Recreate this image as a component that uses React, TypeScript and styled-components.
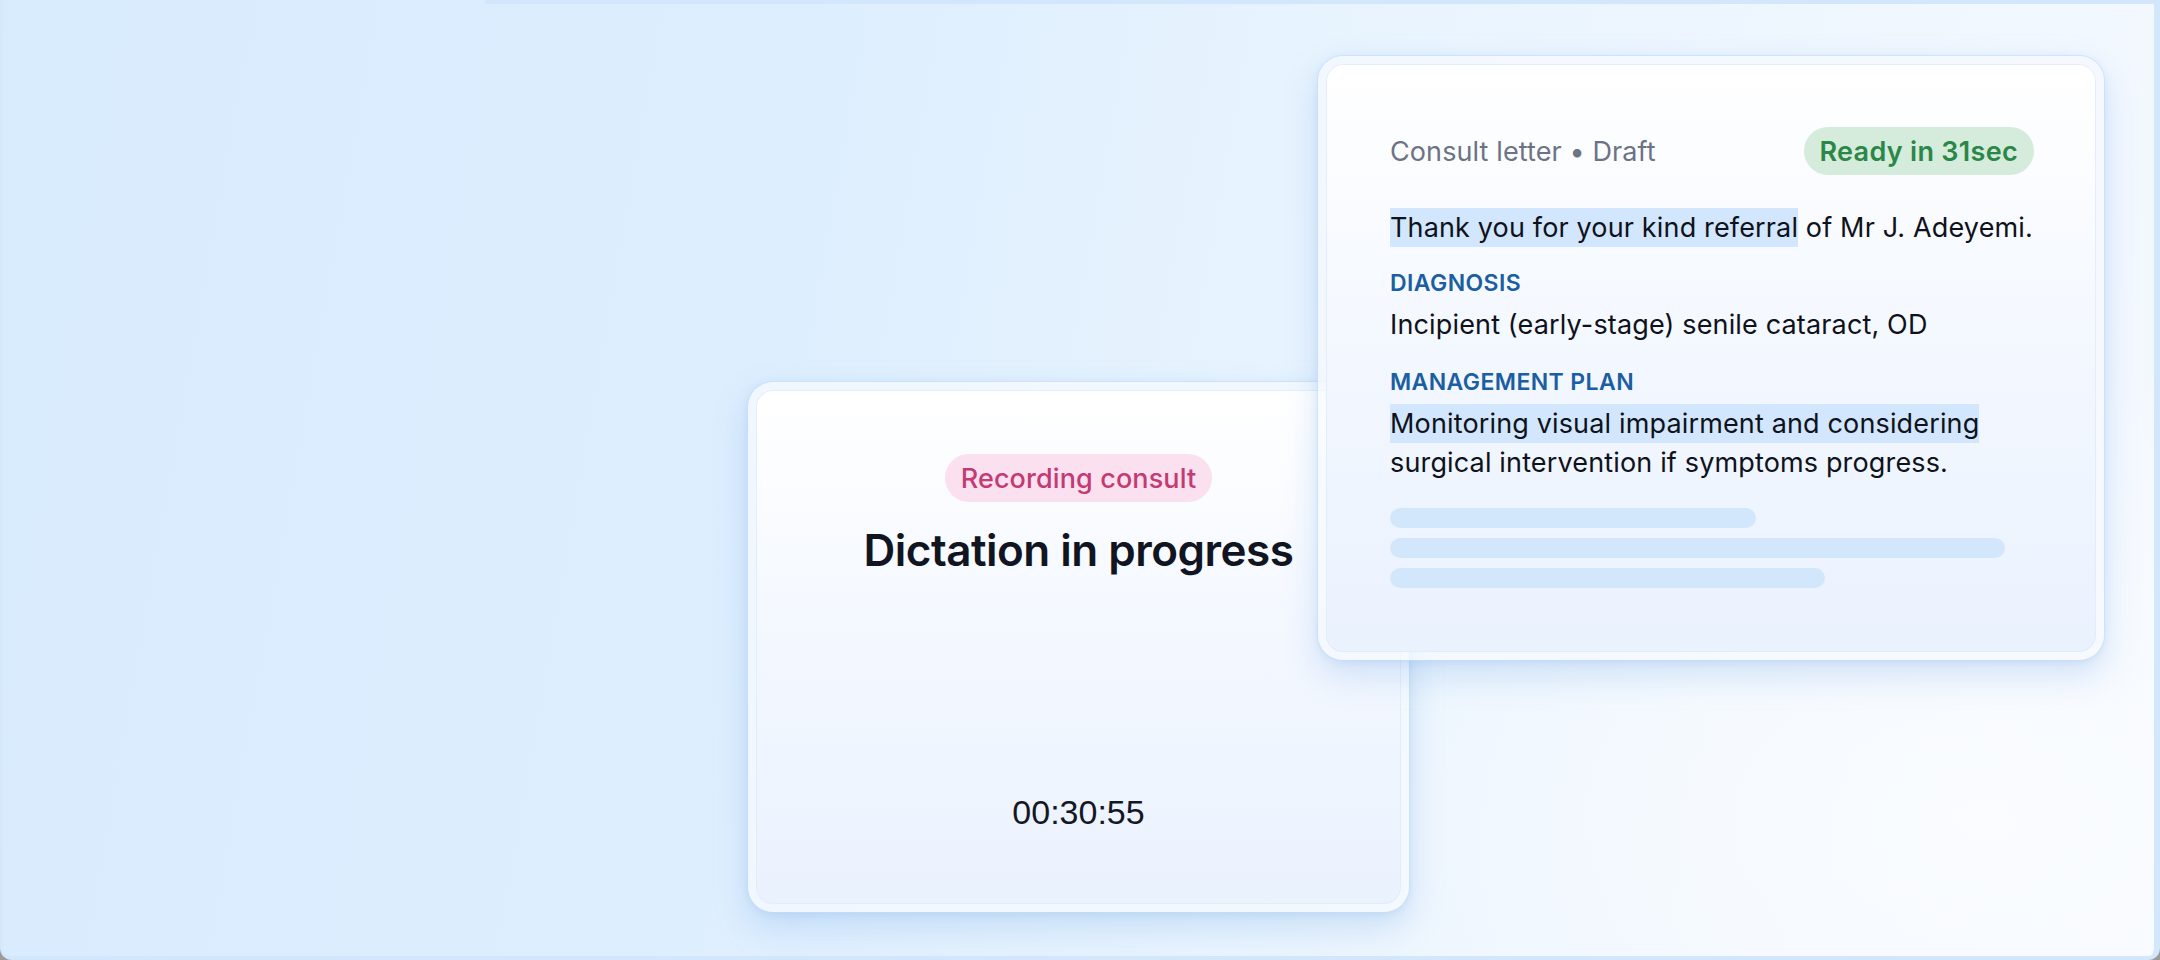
import React from "react"
import styled, { createGlobalStyle } from "styled-components"

const GlobalStyle = createGlobalStyle`
  html, body {
    margin: 0;
    padding: 0;
    background: #9b9b9b;
  }
  body {
    font-family: Inter, Roboto, "Noto Sans", sans-serif;
    -webkit-font-smoothing: antialiased;
  }
`

const Frame = styled.main`
  position: relative;
  width: 2160px;
  height: 960px;
  overflow: hidden;
  border-radius: 0 0 12px 12px;
  background:
    radial-gradient(ellipse 1000px 650px at 1980px 820px, rgba(250, 252, 255, 0.95), rgba(250, 252, 255, 0) 72%),
    linear-gradient(100deg, #d8ebfd 0%, #ddeefe 35%, #e9f4fe 60%, #f5f9ff 100%);
  box-shadow:
    inset -6px 0 0 #d3e7fc,
    inset 0 -4px 0 #d3e7fc,
    inset 3px 0 0 #d6e9fc;
  display: grid;
  grid-template-columns: 748px 570px 91px 695px 1fr;
  grid-template-rows: 56px 326px 278px 252px 1fr;

  &::before {
    content: "";
    position: absolute;
    top: 0;
    left: 485px;
    right: 0;
    height: 4px;
    background: #d3e7fc;
  }
`

const CardShell = styled.section<{ $col: string; $row: string; $z: number }>`
  grid-column: ${(p) => p.$col};
  grid-row: ${(p) => p.$row};
  z-index: ${(p) => p.$z};
  padding: 8px;
  border-radius: 25px;
  background: rgba(246, 250, 255, 0.75);
  box-shadow:
    0 0 0 1px rgba(196, 222, 250, 0.6),
    0 14px 34px rgba(104, 160, 226, 0.28),
    0 2px 8px rgba(120, 170, 230, 0.18);
  display: flex;
`

const CardBody = styled.div<{ $center?: boolean }>`
  flex: 1;
  border-radius: 17px;
  background: linear-gradient(180deg, #ffffff 0%, #f4f8ff 45%, #eaf2fe 100%);
  box-shadow: inset 0 0 0 1px rgba(225, 236, 250, 0.9);
  display: flex;
  flex-direction: column;
  align-items: ${(p) => (p.$center ? "center" : "stretch")};
`

const DictationBody = styled(CardBody)`
  padding: 64px 0 72px;
`

const LetterBody = styled(CardBody)`
  padding: 63px 62px 64px 64px;
`

const Pill = styled.span<{ $tone: "pink" | "green" }>`
  display: inline-flex;
  align-items: center;
  justify-content: center;
  height: 48px;
  padding: 0 16px;
  border-radius: 24px;
  font-size: 27px;
  font-weight: ${(p) => (p.$tone === "green" ? 600 : 500)};
  letter-spacing: ${(p) => (p.$tone === "green" ? 0.3 : 0.1)}px;
  white-space: nowrap;
  color: ${(p) => (p.$tone === "green" ? "#2b8748" : "#c43a73")};
  background: ${(p) => (p.$tone === "green" ? "#d5ecdd" : "#fbe0f0")};
`

const Title = styled.h1`
  margin: 22px 0 0;
  font-size: 44px;
  line-height: 52px;
  font-weight: 600;
  letter-spacing: -0.5px;
  color: #111522;
  white-space: nowrap;
`

const Timer = styled.div`
  margin-top: auto;
  font-family: "Liberation Sans", Arial, sans-serif;
  font-size: 34px;
  line-height: 40px;
  color: #141824;
`

const LetterHeader = styled.header`
  display: flex;
  align-items: center;
  justify-content: space-between;
  height: 48px;
`

const Meta = styled.span`
  font-size: 27px;
  color: #6b7385;
  letter-spacing: 0.1px;
`

const Paragraph = styled.p<{ $gap: number }>`
  margin: ${(p) => p.$gap}px 0 0;
  font-size: 27px;
  line-height: 39px;
  color: #0f121a;
  letter-spacing: 0.15px;
  white-space: nowrap;
`

const Mark = styled.span`
  display: inline-block;
  background: #d2e7fd;
`

const Label = styled.h2<{ $gap: number }>`
  margin: ${(p) => p.$gap}px 0 0;
  font-size: 23px;
  line-height: 30px;
  font-weight: 600;
  color: #1b5ea2;
  letter-spacing: 0.4px;
`

const Skeleton = styled.div`
  margin-top: 26px;
  display: flex;
  flex-direction: column;
  gap: 10px;
`

const SkeletonBar = styled.div`
  height: 20px;
  border-radius: 10px;
  background: #d3e7fc;
`

const bars = [366, 615, 435]

export default function App() {
  return (
    <>
      <GlobalStyle />
      <Frame>
        <CardShell $col="2 / 4" $row="3 / 5" $z={1}>
          <DictationBody $center>
            <Pill $tone="pink">Recording consult</Pill>
            <Title>Dictation in progress</Title>
            <Timer>00:30:55</Timer>
          </DictationBody>
        </CardShell>

        <CardShell $col="3 / 5" $row="2 / 4" $z={2}>
          <LetterBody>
            <LetterHeader>
              <Meta>Consult letter • Draft</Meta>
              <Pill $tone="green">Ready in 31sec</Pill>
            </LetterHeader>
            <Paragraph $gap={33}>
              <Mark>Thank you for your kind referral</Mark> of Mr J. Adeyemi.
            </Paragraph>
            <Label $gap={21}>DIAGNOSIS</Label>
            <Paragraph $gap={7}>Incipient (early-stage) senile cataract, OD</Paragraph>
            <Label $gap={23}>MANAGEMENT PLAN</Label>
            <Paragraph $gap={7}>
              <Mark>Monitoring visual impairment and considering</Mark>
              <br />
              surgical intervention if symptoms progress.
            </Paragraph>
            <Skeleton>
              {bars.map((w) => (
                <SkeletonBar key={w} style={{ width: w }} />
              ))}
            </Skeleton>
          </LetterBody>
        </CardShell>
      </Frame>
    </>
  )
}
